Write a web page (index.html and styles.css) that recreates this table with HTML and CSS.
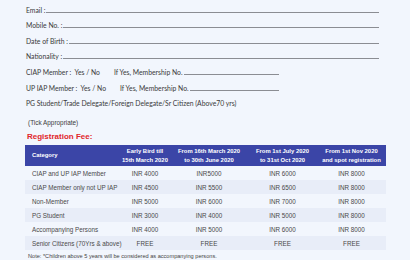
FILE: index.html
```html
<!DOCTYPE html>
<html lang="en">
<head>
    <meta charset="UTF-8">
    <meta name="viewport" content="width=device-width, initial-scale=1.0">
    <title>Registration Form</title>
    <link rel="stylesheet" href="styles.css">
</head>
<body>
    <div class="page">
        <div class="field"><span>Email :</span><span class="blank"></span></div>
        <div class="field"><span>Mobile No. :</span><span class="blank"></span></div>
        <div class="field"><span>Date of Birth :</span><span class="blank"></span></div>
        <div class="field"><span>Nationality :</span><span class="blank"></span></div>
        <div class="field">
            <span class="member">CIAP Member :&nbsp; Yes / No</span>
            <span class="if-yes">If Yes, Membership No.</span>
            <span class="blank ciap"></span>
        </div>
        <div class="field">
            <span class="member">UP IAP Member :&nbsp; Yes / No</span>
            <span class="if-yes up">If Yes, Membership No.</span>
            <span class="blank upiap"></span>
        </div>
        <div class="field"><span>PG Student/Trade Delegate/Foreign Delegate/Sr Citizen (Above70 yrs)</span></div>

        <p class="tick">(Tick Appropriate)</p>
        <h2 class="fee-title">Registration Fee:</h2>

        <table class="fees">
            <colgroup>
                <col class="c-cat">
                <col class="c-early">
                <col class="c-march">
                <col class="c-july">
                <col class="c-nov">
            </colgroup>
            <thead>
                <tr>
                    <th class="cat">Category</th>
                    <th>Early Bird till<br>15th March 2020</th>
                    <th>From 16th March 2020<br>to 30th June 2020</th>
                    <th>From 1st July 2020<br>to 31st Oct 2020</th>
                    <th>From 1st Nov 2020<br>and spot registration</th>
                </tr>
            </thead>
            <tbody>
                <tr>
                    <td class="cat">CIAP and UP IAP Member</td>
                    <td>INR 4000</td><td>INR5000</td><td>INR 6000</td><td>INR 8000</td>
                </tr>
                <tr>
                    <td class="cat">CIAP Member only not UP IAP</td>
                    <td>INR 4500</td><td>INR 5500</td><td>INR 6500</td><td>INR 8000</td>
                </tr>
                <tr>
                    <td class="cat">Non-Member</td>
                    <td>INR 5000</td><td>INR 6000</td><td>INR 7000</td><td>INR 8000</td>
                </tr>
                <tr>
                    <td class="cat">PG Student</td>
                    <td>INR 3000</td><td>INR 4000</td><td>INR 5000</td><td>INR 8000</td>
                </tr>
                <tr>
                    <td class="cat">Accompanying Persons</td>
                    <td>INR 4000</td><td>INR 5000</td><td>INR 6000</td><td>INR 8000</td>
                </tr>
                <tr>
                    <td class="cat">Senior Citizens (70Yrs &amp; above)</td>
                    <td>FREE</td><td>FREE</td><td>FREE</td><td>FREE</td>
                </tr>
            </tbody>
        </table>

        <p class="note">Note: *Children above 5 years will be considered as accompanying persons.</p>
    </div>
</body>
</html>
```

FILE: styles.css
```css
body {
    margin: 0;
    background-color: #f2f6fd;
    color: #3a3a3a;
}

.page {
    width: 353px;
    padding-left: 26px;
}

.field {
    display: flex;
    align-items: flex-end;
    height: 15.6px;
    padding-bottom: 2px;
    box-sizing: border-box;
    font-family: Lato, "Open Sans", sans-serif;
    font-size: 6.8px;
    line-height: 8px;
    white-space: nowrap;
}

.blank {
    flex: 1;
    margin-left: 1px;
    margin-bottom: 1px;
    border-bottom: 1.3px solid #8b8d93;
}

.blank.ciap {
    flex: none;
    width: 95px;
}

.blank.upiap {
    flex: none;
    width: 89px;
}

.if-yes {
    margin-left: 14px;
}

.tick {
    margin: 10px 0 0 2px;
    font-family: "Liberation Sans", Arial, sans-serif;
    font-size: 6.4px;
    line-height: 8px;
}

.fee-title {
    margin: 5px 0 0 1px;
    font-family: "Liberation Sans", Arial, sans-serif;
    font-size: 8px;
    line-height: 9px;
    font-weight: bold;
    color: #e1262b;
}

.fees {
    width: 361px;
    margin: 4px 0 0 -1px;
    border-collapse: collapse;
    table-layout: fixed;
    font-family: "Liberation Sans", Arial, sans-serif;
    font-size: 6.3px;
}

.c-cat { width: 95px; }
.c-early { width: 50px; }
.c-march { width: 78px; }
.c-july { width: 69px; }
.c-nov { width: 69px; }

.fees th {
    height: 21px;
    padding: 0;
    background-color: #3b45a7;
    color: #ffffff;
    font-weight: bold;
    font-size: 5.9px;
    line-height: 8.5px;
    text-align: center;
    white-space: nowrap;
}

.fees td {
    height: 14px;
    padding: 0;
    text-align: center;
    color: #4a4a4a;
    white-space: nowrap;
}

.fees .cat {
    text-align: left;
    padding-left: 7px;
}

.fees tbody tr:nth-child(even) {
    background-color: #e8edf8;
}

.note {
    margin: 3px 0 0 2px;
    font-family: "Liberation Sans", Arial, sans-serif;
    font-size: 5.6px;
    color: #444;
}
```
